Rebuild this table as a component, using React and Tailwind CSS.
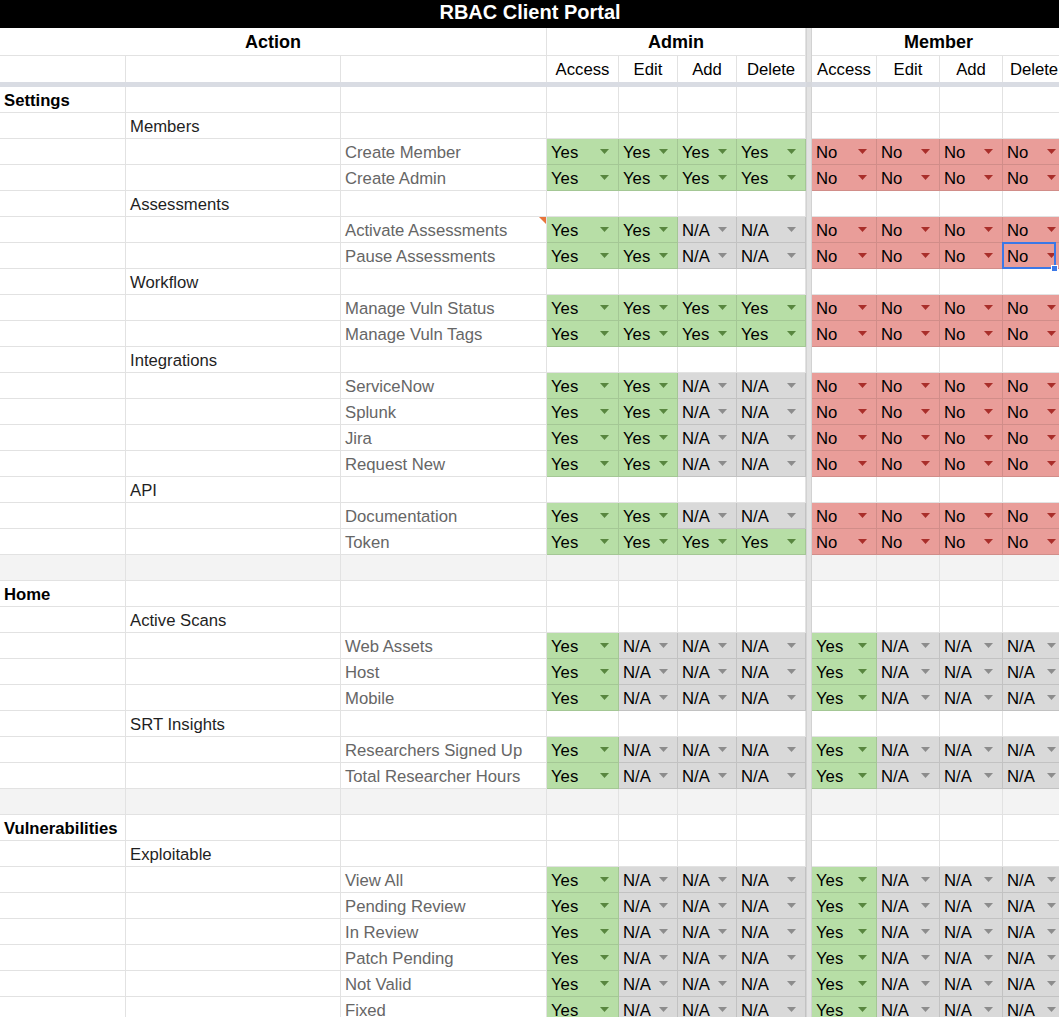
import React from "react";

const FONT = { fontFamily: '"Liberation Sans", Arial, Helvetica, sans-serif' };

const rows = [
  { a: "Settings" },
  { b: "Members" },
  { c: "Create Member", v: "YYYYNNNN" },
  { c: "Create Admin", v: "YYYYNNNN" },
  { b: "Assessments" },
  { c: "Activate Assessments", v: "YYAANNNN", note: true },
  { c: "Pause Assessments", v: "YYAANNNN", sel: 7 },
  { b: "Workflow" },
  { c: "Manage Vuln Status", v: "YYYYNNNN" },
  { c: "Manage Vuln Tags", v: "YYYYNNNN" },
  { b: "Integrations" },
  { c: "ServiceNow", v: "YYAANNNN" },
  { c: "Splunk", v: "YYAANNNN" },
  { c: "Jira", v: "YYAANNNN" },
  { c: "Request New", v: "YYAANNNN" },
  { b: "API" },
  { c: "Documentation", v: "YYAANNNN" },
  { c: "Token", v: "YYYYNNNN" },
  { gap: true },
  { a: "Home" },
  { b: "Active Scans" },
  { c: "Web Assets", v: "YAAAYAAA" },
  { c: "Host", v: "YAAAYAAA" },
  { c: "Mobile", v: "YAAAYAAA" },
  { b: "SRT Insights" },
  { c: "Researchers Signed Up", v: "YAAAYAAA" },
  { c: "Total Researcher Hours", v: "YAAAYAAA" },
  { gap: true },
  { a: "Vulnerabilities" },
  { b: "Exploitable" },
  { c: "View All", v: "YAAAYAAA" },
  { c: "Pending Review", v: "YAAAYAAA" },
  { c: "In Review", v: "YAAAYAAA" },
  { c: "Patch Pending", v: "YAAAYAAA" },
  { c: "Not Valid", v: "YAAAYAAA" },
  { c: "Fixed", v: "YAAAYAAA" },
];

const STYLES = {
  Y: { label: "Yes", bg: "bg-[#b7dea6]", arrow: "#58863f" },
  N: { label: "No", bg: "bg-[#e99d99]", arrow: "#a92e2a" },
  A: { label: "N/A", bg: "bg-[#d9d9d9]", arrow: "#8c8c8c" },
};

function Arrow({ color }) {
  return (
    <svg width="9" height="5" viewBox="0 0 9 5" className="shrink-0">
      <polygon points="0,0 9,0 4.5,5" fill={color} />
    </svg>
  );
}

function ValCell({ code, selected }) {
  const s = STYLES[code];
  return (
    <div
      className={`relative h-[26px] border-r border-b border-black/10 ${s.bg} flex items-center justify-between pl-[4px] pr-[9px] text-[16.7px] text-black`}
    >
      <span className="pt-[2px]">{s.label}</span>
      <Arrow color={s.arrow} />
      {selected && (
        <>
          <div className="absolute -left-px -top-px right-[9px] -bottom-px border-2 border-[#3b78e7]" />
          <div className="absolute right-[7px] -bottom-[4px] w-[7px] h-[7px] bg-[#3b78e7] border border-white" />
        </>
      )}
    </div>
  );
}

function Divider() {
  return <div className="bg-[#e3e3e3] border-x border-[#d2d2d2]" />;
}

function Plain({ children, className = "" }) {
  return (
    <div
      className={`relative h-[26px] border-r border-b border-[#e2e2e2] flex items-center px-[4px] text-[16.7px] whitespace-nowrap overflow-visible ${className}`}
    >
      <span className="pt-[2px]">{children}</span>
    </div>
  );
}

function Row({ r }) {
  if (r.gap) {
    return (
      <>
        {Array.from({ length: 7 }).map((_, i) => (
          <div key={i} className="h-[26px] border-r border-b border-[#e2e2e2] bg-[#f3f3f3]" />
        ))}
        <Divider />
        {Array.from({ length: 4 }).map((_, i) => (
          <div key={"m" + i} className="h-[26px] border-r border-b border-[#e2e2e2] bg-[#f3f3f3]" />
        ))}
      </>
    );
  }
  const vals = r.v ? r.v.split("") : null;
  return (
    <>
      <Plain className="font-bold text-black">{r.a || ""}</Plain>
      <Plain className="text-[#1f1f1f]">{r.b || ""}</Plain>
      <Plain className="text-[#666666]">
        {r.c || ""}
        {r.note && (
          <svg width="7" height="7" viewBox="0 0 7 7" className="absolute right-0 top-0">
            <polygon points="0,0 7,0 7,7" fill="#e8743b" />
          </svg>
        )}
      </Plain>
      {vals
        ? vals.slice(0, 4).map((c, i) => <ValCell key={i} code={c} />)
        : Array.from({ length: 4 }).map((_, i) => <Plain key={i} />)}
      <Divider />
      {vals
        ? vals.slice(4).map((c, i) => <ValCell key={i} code={c} selected={r.sel === i + 4} />)
        : Array.from({ length: 4 }).map((_, i) => <Plain key={"m" + i} />)}
    </>
  );
}

export default function App() {
  return (
    <div className="w-[1059px] h-[1017px] overflow-hidden bg-white" style={FONT}>
      <div className="grid w-[1066px] grid-cols-[126px_215px_206px_72px_59px_59px_69px_6px_65px_63px_63px_63px]">
        {/* Title */}
        <div className="col-span-12 h-[28px] bg-black flex items-center justify-center pb-[5px]">
          <span className="text-white font-bold text-[20px] pr-[6px]">RBAC Client Portal</span>
        </div>

        {/* Header row 1 */}
        <div className="col-span-3 h-[28px] border-r border-b border-[#e2e2e2] flex items-center justify-center pt-[2px] font-bold text-[18px] text-black">
          Action
        </div>
        <div className="col-span-4 h-[28px] border-r border-b border-[#e2e2e2] flex items-center justify-center pt-[2px] font-bold text-[18px] text-black">
          Admin
        </div>
        <Divider />
        <div className="col-span-4 h-[28px] border-r border-b border-[#e2e2e2] flex items-center justify-center pt-[2px] font-bold text-[18px] text-black">
          Member
        </div>

        {/* Header row 2 */}
        <div className="h-[26px] border-r border-[#e2e2e2]" />
        <div className="h-[26px] border-r border-[#e2e2e2]" />
        <div className="h-[26px] border-r border-[#e2e2e2]" />
        {["Access", "Edit", "Add", "Delete"].map((t) => (
          <div key={"a" + t} className="h-[26px] border-r border-[#e2e2e2] flex items-center justify-center pt-[2px] text-[16.7px] text-black">
            {t}
          </div>
        ))}
        <Divider />
        {["Access", "Edit", "Add", "Delete"].map((t) => (
          <div key={"m" + t} className="h-[26px] border-r border-[#e2e2e2] flex items-center justify-center pt-[2px] text-[16.7px] text-black">
            {t}
          </div>
        ))}

        {/* Frozen line */}
        <div className="col-span-7 h-[5px] bg-[#d9dce3]" />
        <div className="h-[5px] bg-[#d6d8dd]" />
        <div className="col-span-4 h-[5px] bg-[#d9dce3]" />

        {rows.map((r, i) => (
          <Row key={i} r={r} />
        ))}
      </div>
    </div>
  );
}
